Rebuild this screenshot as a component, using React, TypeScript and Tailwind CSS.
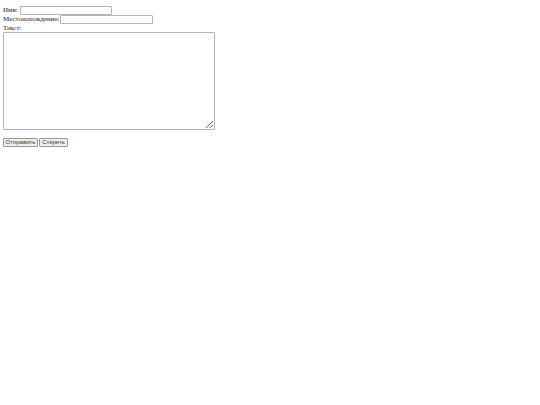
export default function App() {
  return (
    <div className="min-h-[405px] w-[540px] bg-white pt-[6px] pl-[3px] text-[7px] leading-[9px] text-[#222] font-['Liberation_Serif',serif]">
      <div className="flex h-[9px] items-center gap-[2px]">
        <span>Имя:</span>
        <input type="text" className="h-[9px] w-[92px] rounded-[1px] border border-[#b5b5b5] bg-white outline-none" />
      </div>
      <div className="flex h-[9px] items-center gap-[1px]">
        <span>Местонахождение:</span>
        <input type="text" className="h-[9px] w-[93px] rounded-[1px] border border-[#b5b5b5] bg-white outline-none" />
      </div>
      <div className="h-[8px] leading-[8px]">Текст:</div>
      <textarea className="block h-[98px] w-[212px] resize rounded-[1px] border border-[#b5b5b5] bg-white outline-none" />
      <div className="mt-[8px] flex gap-[1px] font-['Liberation_Sans',sans-serif] text-[6px] leading-[7px] text-[#333]">
        <button className="h-[9px] w-[35px] rounded-[1px] border border-[#999] bg-[#efefef] px-[1px]">Отправить</button>
        <button className="h-[9px] w-[29px] rounded-[1px] border border-[#999] bg-[#efefef] px-[1px]">Стереть</button>
      </div>
    </div>
  );
}
